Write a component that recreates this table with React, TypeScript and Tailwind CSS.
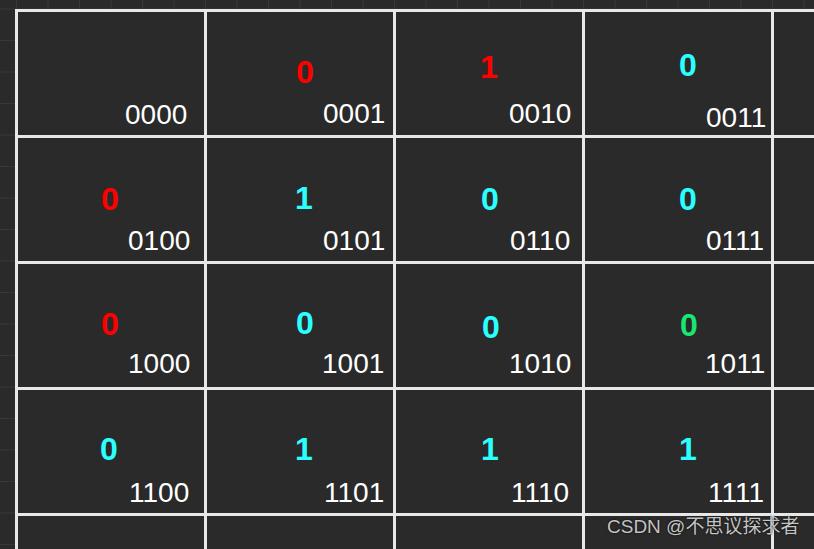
import React from "react";

interface Cell {
  num?: string;
  numCls?: string;
  label?: string;
  labelCls?: string;
}

// bits written into each K-map square, positions tuned per cell
const rows: Cell[][] = [
  [
    { label: "0000", labelCls: "ml-[107px] mt-[89px]" },
    { num: "0", numCls: "ml-[89px] mt-[44px] text-[#ff0000]", label: "0001", labelCls: "ml-[116px] mt-[12px]" },
    { num: "1", numCls: "ml-[84px] mt-[39px] text-[#ff0000]", label: "0010", labelCls: "ml-[113px] mt-[17px]" },
    { num: "0", numCls: "ml-[94px] mt-[37px] text-[#2bffff]", label: "0011", labelCls: "ml-[121px] mt-[23px]" },
    {},
  ],
  [
    { num: "0", numCls: "ml-[83px] mt-[45px] text-[#ff0000]", label: "0100", labelCls: "ml-[110px] mt-[12px]" },
    { num: "1", numCls: "ml-[88px] mt-[44px] text-[#2bffff]", label: "0101", labelCls: "ml-[116px] mt-[13px]" },
    { num: "0", numCls: "ml-[85px] mt-[45px] text-[#2bffff]", label: "0110", labelCls: "ml-[114px] mt-[12px]" },
    { num: "0", numCls: "ml-[94px] mt-[45px] text-[#2bffff]", label: "0111", labelCls: "ml-[121px] mt-[12px]" },
    {},
  ],
  [
    { num: "0", numCls: "ml-[83px] mt-[44px] text-[#ff0000]", label: "1000", labelCls: "ml-[110px] mt-[10px]" },
    { num: "0", numCls: "ml-[89px] mt-[43px] text-[#2bffff]", label: "1001", labelCls: "ml-[115px] mt-[11px]" },
    { num: "0", numCls: "ml-[86px] mt-[47px] text-[#2bffff]", label: "1010", labelCls: "ml-[113px] mt-[7px]" },
    { num: "0", numCls: "ml-[95px] mt-[45px] text-[#17e870]", label: "1011", labelCls: "ml-[120px] mt-[9px]" },
    {},
  ],
  [
    { num: "0", numCls: "ml-[82px] mt-[43px] text-[#2bffff]", label: "1100", labelCls: "ml-[111px] mt-[14px]" },
    { num: "1", numCls: "ml-[88px] mt-[43px] text-[#2bffff]", label: "1101", labelCls: "ml-[117px] mt-[14px]" },
    { num: "1", numCls: "ml-[85px] mt-[43px] text-[#2bffff]", label: "1110", labelCls: "ml-[115px] mt-[14px]" },
    { num: "1", numCls: "ml-[94px] mt-[43px] text-[#2bffff]", label: "1111", labelCls: "ml-[123px] mt-[14px]" },
    {},
  ],
  [{}, {}, {}, {}, {}],
];

const KCell = ({ cell }: { cell: Cell }) => (
  <div className="flex flex-col items-start bg-[#2a2a2a] overflow-hidden">
    {cell.num && (
      <div className={`h-[32px] text-[32px] leading-none font-bold ${cell.numCls}`}>
        {cell.num}
      </div>
    )}
    {cell.label && (
      <div className={`h-[28px] text-[28px] leading-none text-white ${cell.labelCls}`}>
        {cell.label}
      </div>
    )}
  </div>
);

export default function App() {
  return (
    <div className="relative w-[814px] h-[549px] overflow-hidden bg-[#2a2a2a] bg-[linear-gradient(to_right,#383838_1px,transparent_1px),linear-gradient(to_bottom,#383838_1px,transparent_1px)] bg-[size:31.5px_31.5px] bg-[position:16px_8.5px] font-['Liberation_Sans',Arial,sans-serif]">
      <div className="pl-[15px] pt-[9px]">
        <div className="inline-grid grid-cols-[repeat(5,186px)] grid-rows-[repeat(5,123px)] gap-[3px] p-[3px] bg-[#e8e8e8]">
          {rows.flat().map((cell, i) => (
            <KCell key={i} cell={cell} />
          ))}
        </div>
      </div>

      {/* watermark */}
      <div className="absolute left-[607px] top-[517px] text-[19px] leading-none text-[#c4c4c4] whitespace-nowrap [text-shadow:0_0_2px_#000] font-['Liberation_Sans','Noto_Sans_CJK_SC',sans-serif]">
        CSDN @不思议探求者
      </div>
    </div>
  );
}
